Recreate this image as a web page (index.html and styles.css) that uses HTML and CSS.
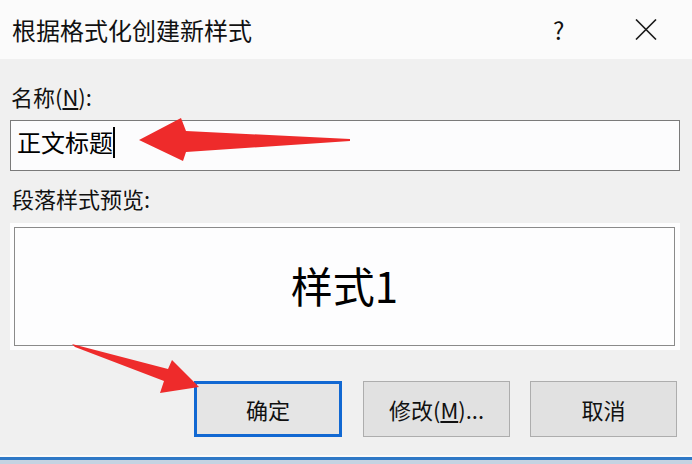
FILE: index.html
```html
<!DOCTYPE html>
<html lang="zh-CN">
<head>
<meta charset="utf-8">
<title>根据格式化创建新样式</title>
<link rel="stylesheet" href="styles.css">
</head>
<body>
<div class="dialog">
  <header class="titlebar">
    <span class="title">根据格式化创建新样式</span>
    <div class="controls">
      <span class="help">?</span>
      <svg class="close" width="22" height="21" viewBox="0 0 22 21">
        <path d="M1 0.5 L21 20.5 M21 0.5 L1 20.5" stroke="#1a1a1a" stroke-width="1.6" fill="none"/>
      </svg>
    </div>
  </header>
  <main class="content">
    <div class="label label-name">名称(<u>N</u>):</div>
    <div class="field"><span class="value">正文标题</span><span class="caret"></span></div>
    <div class="label label-preview">段落样式预览:</div>
    <div class="preview"><div class="preview-inner">样式1</div></div>
    <div class="buttons">
      <button class="btn btn-default">确定</button>
      <button class="btn">修改(<u>M</u>)...</button>
      <button class="btn">取消</button>
    </div>
  </main>
  <footer class="bottom"><div class="strip"></div><div class="line"></div><div class="under"></div></footer>
  <svg class="annot" width="692" height="464" viewBox="0 0 692 464">
    <polygon points="139,140 181,118 186,131 350,139 350,141 186,152 183,161" fill="#ee2b2b"/>
    <polygon points="72,344 168,369 172,360 199,387 160,393 164,381 75,347" fill="#ee2b2b"/>
  </svg>
</div>
</body>
</html>
```
FILE: styles.css
```css
html, body {
  margin: 0;
  padding: 0;
}
body {
  width: 692px;
  height: 464px;
  overflow: hidden;
  background: #f0f0f0;
  font-family: "Noto Sans CJK SC", "Noto Sans", sans-serif;
  color: #000;
}
.dialog {
  position: relative;
  width: 692px;
  height: 464px;
  display: flex;
  flex-direction: column;
}
.titlebar {
  height: 59px;
  flex: none;
  background: #fbfbfb;
  display: flex;
  align-items: center;
  justify-content: space-between;
  padding: 0 35px 0 12px;
}
.title {
  font-size: 24px;
  line-height: 30px;
  color: #111;
}
.controls {
  display: flex;
  align-items: center;
  gap: 70px;
}
.help {
  font-size: 24px;
  line-height: 30px;
  width: 12px;
  color: #111;
}
.close {
  display: block;
}
.content {
  flex: 1;
  display: flex;
  flex-direction: column;
  padding: 0 12px 0 10px;
}
.label {
  font-size: 22px;
  line-height: 32px;
  height: 32px;
  padding-left: 1px;
  color: #111;
}
.label-name {
  margin-top: 21px;
}
.label-preview {
  margin-top: 11px;
  padding-left: 2px;
}
.field {
  margin-top: 8px;
  border: 1px solid #7a7a7a;
  background: #fcfcfd;
  display: flex;
  align-items: center;
  padding: 0 0 7px 6px;
  box-sizing: content-box;
  height: 42px;
}
.value {
  font-size: 24px;
  line-height: 30px;
}
.caret {
  display: inline-block;
  width: 2px;
  height: 31px;
  background: #000;
}
.preview {
  margin-top: 9px;
  height: 127px;
  background: #fdfdfe;
  padding: 4px 5px 4px 4px;
  box-sizing: border-box;
}
.preview-inner {
  height: 100%;
  box-sizing: border-box;
  border: 1px solid #8a8a8a;
  display: flex;
  align-items: center;
  justify-content: center;
  font-size: 42px;
  line-height: 50px;
  padding-bottom: 4px;
}
.buttons {
  margin-top: 31px;
  display: flex;
  justify-content: flex-end;
  gap: 20px;
  padding-right: 3px;
}
.btn {
  font: inherit;
  font-size: 22px;
  line-height: 30px;
  width: 147px;
  height: 56px;
  border: 1px solid #adadad;
  background: #e1e1e1;
  color: #111;
  padding: 0;
  margin: 0;
}
.btn-default {
  width: 148px;
  border: 3px solid #1168d2;
  background: #e5e5e5;
  margin-right: 1px;
}
.bottom {
  flex: none;
  display: flex;
  flex-direction: column;
}
.strip {
  height: 2px;
  background: #fafafa;
}
.line {
  height: 3px;
  background: #2f78c6;
}
.under {
  height: 4px;
  background: #c5d3e2;
}
.annot {
  position: absolute;
  left: 0;
  top: 0;
  pointer-events: none;
}
```
